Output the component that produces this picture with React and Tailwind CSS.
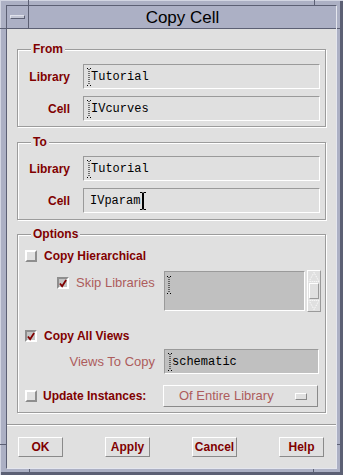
const RED = 'text-[#800000]';
const STIPPLE = 'text-[#ad5c5c]';

function DotCursor() {
  return (
    <svg width="5" height="18" viewBox="0 0 5 18" className="shrink-0 -mr-[1px]">
      <rect x="0" y="0" width="1" height="1" fill="#000" />
      <rect x="3" y="0" width="1" height="1" fill="#000" />
      {[1, 3, 5, 7, 9, 11, 13, 15].map((y) => (
        <rect key={y} x="1.5" y={y} width="1" height="1" fill="#000" />
      ))}
      <rect x="0" y="17" width="1" height="1" fill="#000" />
      <rect x="3" y="17" width="1" height="1" fill="#000" />
    </svg>
  );
}

function SolidCursor() {
  return (
    <svg width="6" height="18" viewBox="0 0 6 18" className="shrink-0">
      <path d="M0 0.5h2.5M3.5 0.5h2.5M0 17.5h2.5M3.5 17.5h2.5" stroke="#000" />
      <rect x="2" y="1" width="2" height="16" fill="#000" />
    </svg>
  );
}

function Field({ value, cursor = 'dot', width = 'w-[237px]', bg = 'bg-[#e0e0e0]' }) {
  return (
    <div
      className={`flex h-[25px] ${width} items-center border border-t-[#9a9a9a] border-l-[#9a9a9a] border-b-white border-r-white ${bg} pl-[3px] font-['Liberation_Mono',monospace] text-[12px] text-black`}
    >
      {cursor === 'dot' ? <DotCursor /> : <span className="w-[3px]" />}
      <span>{value}</span>
      {cursor === 'solid' && <SolidCursor />}
    </div>
  );
}

function Row({ label, value, cursor }) {
  return (
    <div className="flex items-center">
      <span className={`w-[52px] text-right text-[12px] font-bold ${RED}`}>{label}</span>
      <div className="ml-[13px]">
        <Field value={value} cursor={cursor} />
      </div>
    </div>
  );
}

function Group({ label, className, children }) {
  return (
    <div
      className={`relative mx-[10px] border border-[#9c9c9c] shadow-[1px_1px_0_#fff,inset_1px_1px_0_#fff] ${className}`}
    >
      <span
        className={`absolute left-[13px] top-[-8px] bg-[#e0e0e0] px-[2px] text-[12px] font-bold leading-[14px] ${RED}`}
      >
        {label}
      </span>
      {children}
    </div>
  );
}

function Check({ checked }) {
  if (checked) {
    return (
      <span className="flex h-[12px] w-[12px] shrink-0 items-center justify-center border-2 border-t-[#8e8e8e] border-l-[#8e8e8e] border-b-white border-r-white bg-[#c4c4c4]">
        <svg width="9" height="9" viewBox="0 0 9 9">
          <path d="M1 4.5L3.5 7.5L8 0.5" fill="none" stroke="#800000" strokeWidth="2" />
        </svg>
      </span>
    );
  }
  return (
    <span className="h-[12px] w-[12px] shrink-0 border-2 border-t-white border-l-white border-b-[#8e8e8e] border-r-[#8e8e8e] bg-[#e0e0e0]" />
  );
}

function Button({ children }) {
  return (
    <button
      className={`flex h-[20px] w-[45px] items-center justify-center border border-t-white border-l-white border-b-[#8a8a8a] border-r-[#8a8a8a] bg-[#e0e0e0] text-[12px] font-bold ${RED}`}
    >
      {children}
    </button>
  );
}

function ScrollBar() {
  return (
    <div className="flex h-[42px] w-[14px] flex-col border border-t-white border-l-white border-b-[#9a9a9a] border-r-[#9a9a9a] bg-[#e0e0e0]">
      <svg width="12" height="12" viewBox="0 0 12 12">
        <path d="M6 1.5L11 10.5H1Z" fill="none" stroke="#fff" strokeDasharray="1 1" />
      </svg>
      <div className="mx-[1px] h-[16px] border border-t-white border-l-white border-b-[#9a9a9a] border-r-[#9a9a9a]" />
      <svg width="12" height="12" viewBox="0 0 12 12">
        <path d="M6 10.5L11 1.5H1Z" fill="none" stroke="#fff" strokeDasharray="1 1" />
      </svg>
    </div>
  );
}

export default function App() {
  return (
    <div className="relative h-[475px] w-[343px] bg-[#acb0c4] pb-[6px] pl-[6px] pr-[6px] pt-[5px] font-['Liberation_Sans',sans-serif] shadow-[inset_1px_1px_0_#d2d5e2,inset_-3px_-3px_0_#5c6074]">
      {/* frame notches */}
      <span className="absolute left-[28px] top-0 h-[5px] w-px bg-[#5c6074]" />
      <span className="absolute left-[314px] top-0 h-[5px] w-px bg-[#5c6074]" />
      <span className="absolute left-0 top-[28px] h-px w-[6px] bg-[#5c6074]" />
      <span className="absolute right-0 top-[28px] h-px w-[6px] bg-[#5c6074]" />
      <span className="absolute bottom-0 left-[29px] h-[6px] w-px bg-[#5c6074]" />
      <span className="absolute bottom-0 left-[313px] h-[6px] w-px bg-[#5c6074]" />
      <span className="absolute left-0 top-[444px] h-px w-[6px] bg-[#5c6074]" />
      <span className="absolute right-0 top-[444px] h-px w-[6px] bg-[#5c6074]" />

      <div className="flex h-full flex-col border border-t-[#5c6074] border-l-[#5c6074] border-b-[#e4e6ee] border-r-[#e4e6ee]">
        {/* title bar */}
        <div className="flex h-[23px] shrink-0 border-b border-[#5c6074] bg-[#acb0c5]">
          <div className="w-[22px] border-r border-[#5c6074] pl-[3px] pt-[9px]">
            <div className="h-[4px] w-[15px] border border-t-[#e0e2ec] border-l-[#e0e2ec] border-b-[#5c6074] border-r-[#5c6074] bg-[#c2c5d4]" />
          </div>
          <div className="flex flex-1 items-center justify-center text-[17px] leading-none text-black">
            Copy Cell
          </div>
        </div>

        {/* content */}
        <div className="flex flex-1 flex-col bg-[#e0e0e0]">
          <Group label="From" className="mt-[20px] h-[78px] pt-[14px]">
            <div className="flex flex-col gap-[7px]">
              <Row label="Library" value="Tutorial" />
              <Row label="Cell" value="IVcurves" />
            </div>
          </Group>

          <Group label="To" className="mt-[15px] h-[78px] pt-[13px]">
            <div className="flex flex-col gap-[7px]">
              <Row label="Library" value="Tutorial" />
              <Row label="Cell" value="IVparam" cursor="solid" />
            </div>
          </Group>

          <Group label="Options" className="mt-[14px] h-[179px]">
            <div className="mt-[12px] flex h-[18px] items-center pl-[7px]">
              <Check />
              <span className={`ml-[7px] text-[12px] font-bold ${RED}`}>Copy Hierarchical</span>
            </div>

            <div className="mt-[5px] flex h-[42px]">
              <div className="flex w-[146px] items-start pl-[39px] pt-[7px]">
                <div className="flex items-center">
                  <Check checked />
                  <span className={`ml-[7px] text-[13px] leading-[12px] ${STIPPLE}`}>Skip Libraries</span>
                </div>
              </div>
              <div className="flex items-start gap-[2px]">
                <div className="mt-px h-[40px] w-[141px] border border-t-[#9a9a9a] border-l-[#9a9a9a] border-b-white border-r-white bg-[#c0c0c0] pl-[2px] pt-[4px]">
                  <DotCursor />
                </div>
                <ScrollBar />
              </div>
            </div>

            <div className="mt-[15px] flex h-[18px] items-center pl-[7px]">
              <Check checked />
              <span className={`ml-[7px] text-[12px] font-bold ${RED}`}>Copy All Views</span>
            </div>

            <div className="mt-[4px] flex items-center">
              <span className={`w-[146px] pr-[9px] text-right text-[13px] ${STIPPLE}`}>Views To Copy</span>
              <Field value="schematic" width="w-[155px]" bg="bg-[#c0c0c0]" />
            </div>

            <div className="mt-[11px] flex h-[22px] items-center">
              <div className="flex w-[145px] items-center pl-[7px]">
                <Check />
                <span className={`ml-[6px] text-[12px] font-bold ${RED}`}>Update Instances:</span>
              </div>
              <div className="flex h-[22px] w-[155px] items-center border border-t-white border-l-white border-b-[#8a8a8a] border-r-[#8a8a8a] pl-[15px] pr-[10px]">
                <span className={`flex-1 text-[13px] ${STIPPLE}`}>Of Entire Library</span>
                <span className="h-[7px] w-[12px] border border-t-white border-l-white border-b-[#8a8a8a] border-r-[#8a8a8a]" />
              </div>
            </div>
          </Group>

          <div className="mt-[11px] h-[2px] border-t border-b border-t-[#9a9a9a] border-b-white" />

          <div className="mt-[11px] flex gap-[42px] pl-[11px]">
            <Button>OK</Button>
            <Button>Apply</Button>
            <Button>Cancel</Button>
            <Button>Help</Button>
          </div>
        </div>
      </div>
    </div>
  );
}
